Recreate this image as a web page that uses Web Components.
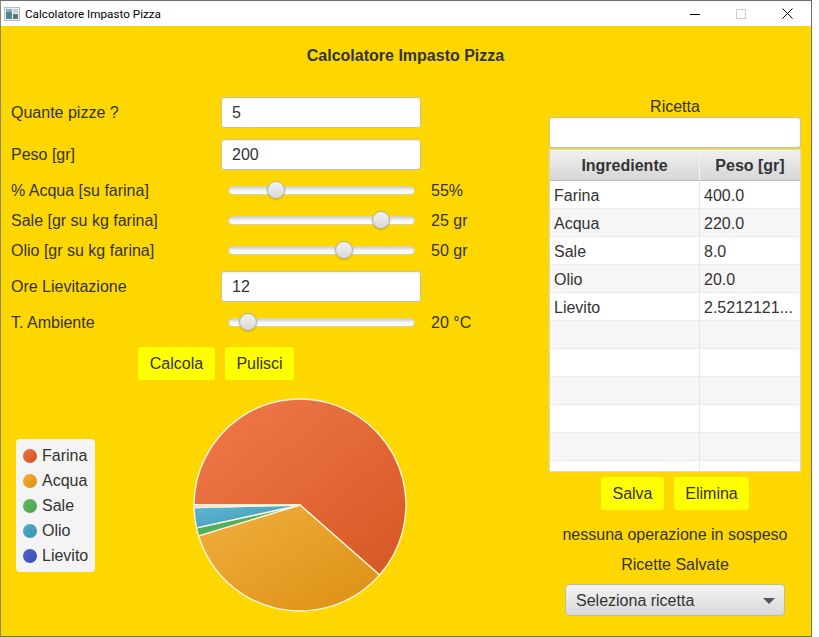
<!DOCTYPE html>
<html lang="it">
<head>
<meta charset="utf-8">
<title>Calcolatore Impasto Pizza</title>
<style>
    html, body { margin: 0; padding: 0; background: #fff; }
    body { font-family: "Liberation Sans", Arial, sans-serif; font-size: 16px; color: #333; }
</style>
</head>
<body>
<app-window>
    <title-bar slot="bar">Calcolatore Impasto Pizza</title-bar>

    <form-row style="margin-top:0"><span slot="label">Quante pizze ?</span><text-field>5</text-field></form-row>
    <form-row style="margin-top:11px"><span slot="label">Peso [gr]</span><text-field>200</text-field></form-row>
    <form-row style="margin-top:5px" compact><span slot="label">% Acqua [su farina]</span><range-slider thumb="276"></range-slider><span slot="value">55%</span></form-row>
    <form-row compact><span slot="label">Sale [gr su kg farina]</span><range-slider thumb="381"></range-slider><span slot="value">25 gr</span></form-row>
    <form-row compact><span slot="label">Olio [gr su kg farina]</span><range-slider thumb="344"></range-slider><span slot="value">50 gr</span></form-row>
    <form-row style="margin-top:6px"><span slot="label">Ore Lievitazione</span><text-field>12</text-field></form-row>
    <form-row style="margin-top:5px" compact><span slot="label">T. Ambiente</span><range-slider thumb="247.5"></range-slider><span slot="value">20 °C</span></form-row>

    <button-bar style="margin:10px 0 0 137px">
        <gold-button style="width:77px">Calcola</gold-button>
        <gold-button style="width:69px">Pulisci</gold-button>
    </button-bar>

    <chart-area style="margin-top:17px">
        <chart-legend>
            <legend-item color="#f3622d">Farina</legend-item>
            <legend-item color="#fba71b">Acqua</legend-item>
            <legend-item color="#57b757">Sale</legend-item>
            <legend-item color="#41a9c9">Olio</legend-item>
            <legend-item color="#4258c9">Lievito</legend-item>
        </chart-legend>
        <pie-chart></pie-chart>
    </chart-area>

    <side-label slot="side" style="height:20px">Ricetta</side-label>
    <text-field slot="side" style="width:252px"></text-field>
    <recipe-table slot="side">
        <recipe-row name="Farina" weight="400.0"></recipe-row>
        <recipe-row name="Acqua" weight="220.0"></recipe-row>
        <recipe-row name="Sale" weight="8.0"></recipe-row>
        <recipe-row name="Olio" weight="20.0"></recipe-row>
        <recipe-row name="Lievito" weight="2.5212121..."></recipe-row>
        <recipe-row></recipe-row>
        <recipe-row></recipe-row>
        <recipe-row></recipe-row>
        <recipe-row></recipe-row>
        <recipe-row></recipe-row>
        <recipe-row></recipe-row>
    </recipe-table>
    <button-bar slot="side" style="margin-top:5px;justify-content:center">
        <gold-button style="width:63px">Salva</gold-button>
        <gold-button style="width:75px">Elimina</gold-button>
    </button-bar>
    <side-label slot="side" style="height:30px;margin-top:10px">nessuna operazione in sospeso</side-label>
    <side-label slot="side" style="height:30px">Ricette Salvate</side-label>
    <combo-box slot="side" style="margin-top:4px">Seleziona ricetta</combo-box>
</app-window>

<script>
// small helper so each component only has to give its css and markup
class ShadowEl extends HTMLElement {
    connectedCallback() {
        if (this.shadowRoot) return;
        const shadow = this.attachShadow({ mode: "open" });
        shadow.innerHTML = `<style>${this.css()}</style>${this.html()}`;
    }
    css() { return ":host { display: block; }"; }
    html() { return "<slot></slot>"; }
}

class AppWindow extends ShadowEl {
    css() {
        return `
            :host {
                display: flex;
                flex-direction: column;
                width: 812px;
                height: 637px;
                box-sizing: border-box;
                border: 1px solid #6f6f6f;
                border-left-color: #8a8a6a;
                overflow: hidden;
            }
            main {
                flex: 1;
                background: #ffd700;
                display: grid;
                grid-template-columns: 548px 252px;
                grid-template-rows: 71px 1fr;
            }
            h1 {
                grid-column: 1 / 3;
                margin: 0;
                padding-left: 9px;
                height: 60px;
                line-height: 60px;
                text-align: center;
                font-size: 16px;
                font-weight: bold;
                color: #333;
            }
            .left { display: flex; flex-direction: column; }
            .side { display: flex; flex-direction: column; align-items: center; }
        `;
    }
    html() {
        return `
            <slot name="bar"></slot>
            <main>
                <h1>Calcolatore Impasto Pizza</h1>
                <div class="left"><slot></slot></div>
                <div class="side"><slot name="side"></slot></div>
            </main>
        `;
    }
}

class TitleBar extends ShadowEl {
    css() {
        return `
            :host {
                display: flex;
                align-items: center;
                height: 25px;
                flex: none;
                background: #fff;
                color: #000;
                font: 11.7px Roboto, "Noto Sans", sans-serif;
            }
            .app { margin: 0 5px 0 3px; flex: none; }
            .grow { flex: 1; }
            .ctl { width: 46px; height: 25px; display: flex; align-items: center; justify-content: center; }
        `;
    }
    html() {
        return `
            <svg class="app" width="16" height="14" viewBox="0 0 16 14">
                <rect x=".5" y=".5" width="15" height="13" fill="#eef0f2" stroke="#b4bcc4"/>
                <rect x="2" y="2" width="6" height="10" fill="#4f8a8b"/>
                <rect x="2" y="2" width="6" height="3" fill="#8fb0b8"/>
                <rect x="9" y="2" width="5" height="4" fill="#c8d4da"/>
                <rect x="9" y="7" width="5" height="5" fill="#5c7684"/>
            </svg>
            <span><slot></slot></span>
            <span class="grow"></span>
            <span class="ctl"><svg width="10" height="10"><path d="M0 5.5h10" stroke="#000"/></svg></span>
            <span class="ctl"><svg width="10" height="10"><rect x=".5" y=".5" width="9" height="9" fill="none" stroke="#ccc"/></svg></span>
            <span class="ctl" style="margin-right:1px"><svg width="11" height="11"><path d="M.5 .5l10 10M10.5 .5l-10 10" stroke="#000" fill="none"/></svg></span>
        `;
    }
}

class FormRow extends ShadowEl {
    css() {
        return `
            :host {
                display: grid;
                grid-template-columns: 210px 200px auto;
                column-gap: 0;
                align-items: center;
                height: 31px;
                padding-left: 10px;
                color: #333;
            }
            :host([compact]) { height: 30px; }
            :host([compact]) .text { padding-top: 1px; }
            .value { padding-left: 10px; }
        `;
    }
    html() {
        return `
            <div class="text"><slot name="label"></slot></div>
            <div><slot></slot></div>
            <div class="text value"><slot name="value"></slot></div>
        `;
    }
}

class TextField extends ShadowEl {
    css() {
        return `
            :host {
                display: block;
                box-sizing: border-box;
                width: 200px;
                height: 31px;
                line-height: 29px;
                padding-left: 10px;
                background: #fff;
                border: 1px solid #c9c1a0;
                border-radius: 3px;
                box-shadow: inset 0 1px 2px rgba(0, 0, 0, 0.08);
                color: #333;
            }
        `;
    }
}

class RangeSlider extends ShadowEl {
    css() {
        return `
            :host { display: block; position: relative; height: 30px; }
            .track {
                position: absolute;
                left: 7px;
                right: 6px;
                top: 50%;
                height: 9px;
                margin-top: -4px;
                box-sizing: border-box;
                border-radius: 5px;
                border: 1px solid #d9d2ac;
                background: linear-gradient(#cfcfcf, #f4f4f4 45%, #fff);
            }
            .thumb {
                position: absolute;
                top: 50%;
                width: 18px;
                height: 18px;
                margin: -9px 0 0 -9px;
                box-sizing: border-box;
                border-radius: 50%;
                border: 1px solid #b5b08e;
                background: linear-gradient(#f2f2f2, #d8d8d8);
                box-shadow: 0 1px 2px rgba(0, 0, 0, 0.2);
            }
        `;
    }
    html() {
        // thumb attribute is the x on the page, the control starts at 221
        const x = parseFloat(this.getAttribute("thumb")) - 221;
        return `<div class="track"></div><div class="thumb" style="left:${x}px"></div>`;
    }
}

class ButtonBar extends ShadowEl {
    css() { return ":host { display: flex; gap: 10px; }"; }
}

class GoldButton extends ShadowEl {
    css() {
        return `
            :host {
                display: block;
                height: 33px;
                line-height: 33px;
                text-align: center;
                background: #ffff00;
                border-radius: 3px;
                color: #333;
            }
        `;
    }
}

class ChartArea extends ShadowEl {
    css() { return ":host { display: flex; align-items: flex-start; padding-left: 15px; }"; }
}

class ChartLegend extends ShadowEl {
    css() {
        return `
            :host {
                display: block;
                box-sizing: border-box;
                width: 79px;
                height: 133px;
                margin-top: 42px;
                padding: 4px 0 0 7px;
                background: #f4f4f4;
                border-radius: 4px;
            }
        `;
    }
}

class LegendItem extends ShadowEl {
    css() {
        return `
            :host { display: flex; align-items: center; gap: 5px; height: 25px; color: #333; }
            i {
                width: 14px;
                height: 14px;
                border-radius: 50%;
                background: var(--dot);
                background-image: linear-gradient(135deg, rgba(255, 255, 255, 0.08), rgba(0, 0, 0, 0.14));
            }
        `;
    }
    html() {
        return `<i style="--dot:${this.getAttribute("color")}"></i><span><slot></slot></span>`;
    }
}

class PieChart extends ShadowEl {
    css() { return ":host { display: block; margin-left: 97px; line-height: 0; }"; }
    html() {
        const cx = 108, cy = 108, r = 106;
        const data = [
            [400, "#f07a4c", "#d65722"],
            [220, "#f0b040", "#dd8f12"],
            [8, "#62bd69", "#3f9f4f"],
            [20, "#60b8d2", "#3a96b6"],
            [2.52, "#e8d8d0", "#d8c8c0"],
        ];
        const total = data.reduce((s, d) => s + d[0], 0);
        let angle = 180, defs = "", paths = "";
        const pt = a => {
            const rad = a * Math.PI / 180;
            return `${(cx + r * Math.cos(rad)).toFixed(2)} ${(cy - r * Math.sin(rad)).toFixed(2)}`;
        };
        data.forEach((d, i) => {
            const sweep = d[0] / total * 360;
            const next = angle - sweep;
            defs += `<linearGradient id="g${i}" x1="0" y1="0" x2="1" y2="1"><stop offset="0" stop-color="${d[1]}"/><stop offset="1" stop-color="${d[2]}"/></linearGradient>`;
            paths += `<path d="M${cx} ${cy}L${pt(angle)}A${r} ${r} 0 ${sweep > 180 ? 1 : 0} 1 ${pt(next)}Z" fill="url(#g${i})" stroke="#fbf3dc" stroke-width="1.4" stroke-linejoin="round"/>`;
            angle = next;
        });
        return `<svg width="216" height="216" viewBox="0 0 216 216"><defs>${defs}</defs>${paths}</svg>`;
    }
}

class SideLabel extends ShadowEl {
    css() {
        return `
            :host {
                display: flex;
                align-items: center;
                justify-content: center;
                color: #333;
                white-space: nowrap;
            }
        `;
    }
}

class RecipeTable extends ShadowEl {
    css() {
        return `
            :host {
                display: block;
                box-sizing: border-box;
                width: 252px;
                height: 323px;
                margin-top: 1px;
                overflow: hidden;
                background: #fff;
                border: 1px solid #d8d8d8;
                color: #333;
            }
            .head {
                display: grid;
                grid-template-columns: 149px 1fr;
                height: 31px;
                line-height: 32px;
                font-weight: bold;
                text-align: center;
                box-sizing: border-box;
                background: linear-gradient(#f1f1f1, #d6d6d6);
                border-bottom: 1px solid #bdbdbd;
            }
            .head span + span { border-left: 1px solid #f2f2f2; }
            ::slotted(:nth-child(even)) { --row-bg: #f6f6f6; }
        `;
    }
    html() {
        return `
            <div class="head"><span>Ingrediente</span><span>Peso [gr]</span></div>
            <slot></slot>
        `;
    }
}

class RecipeRow extends ShadowEl {
    css() {
        return `
            :host {
                display: grid;
                grid-template-columns: 149px 1fr;
                box-sizing: border-box;
                height: 28px;
                background: var(--row-bg, #fff);
                border-bottom: 1px solid #ececec;
            }
            span { padding: 1px 0 0 4px; line-height: 27px; white-space: nowrap; overflow: hidden; }
            span + span { border-left: 1px solid #e6e6e6; }
        `;
    }
    html() {
        const name = this.getAttribute("name") || "";
        const weight = this.getAttribute("weight") || "";
        return `<span>${name}</span><span>${weight}</span>`;
    }
}

class ComboBox extends ShadowEl {
    css() {
        return `
            :host {
                display: flex;
                align-items: center;
                justify-content: space-between;
                box-sizing: border-box;
                width: 220px;
                height: 32px;
                padding: 1px 9px 0 10px;
                background: linear-gradient(#f3f3f3, #d9d9d9);
                border: 1px solid #c4bc92;
                border-radius: 4px;
                color: #333;
            }
            .arrow {
                width: 0;
                height: 0;
                border-left: 6px solid transparent;
                border-right: 6px solid transparent;
                border-top: 6px solid #555;
            }
        `;
    }
    html() { return `<span><slot></slot></span><span class="arrow"></span>`; }
}

customElements.define("app-window", AppWindow);
customElements.define("title-bar", TitleBar);
customElements.define("form-row", FormRow);
customElements.define("text-field", TextField);
customElements.define("range-slider", RangeSlider);
customElements.define("button-bar", ButtonBar);
customElements.define("gold-button", GoldButton);
customElements.define("chart-area", ChartArea);
customElements.define("chart-legend", ChartLegend);
customElements.define("legend-item", LegendItem);
customElements.define("pie-chart", PieChart);
customElements.define("side-label", SideLabel);
customElements.define("recipe-table", RecipeTable);
customElements.define("recipe-row", RecipeRow);
customElements.define("combo-box", ComboBox);
</script>
</body>
</html>
